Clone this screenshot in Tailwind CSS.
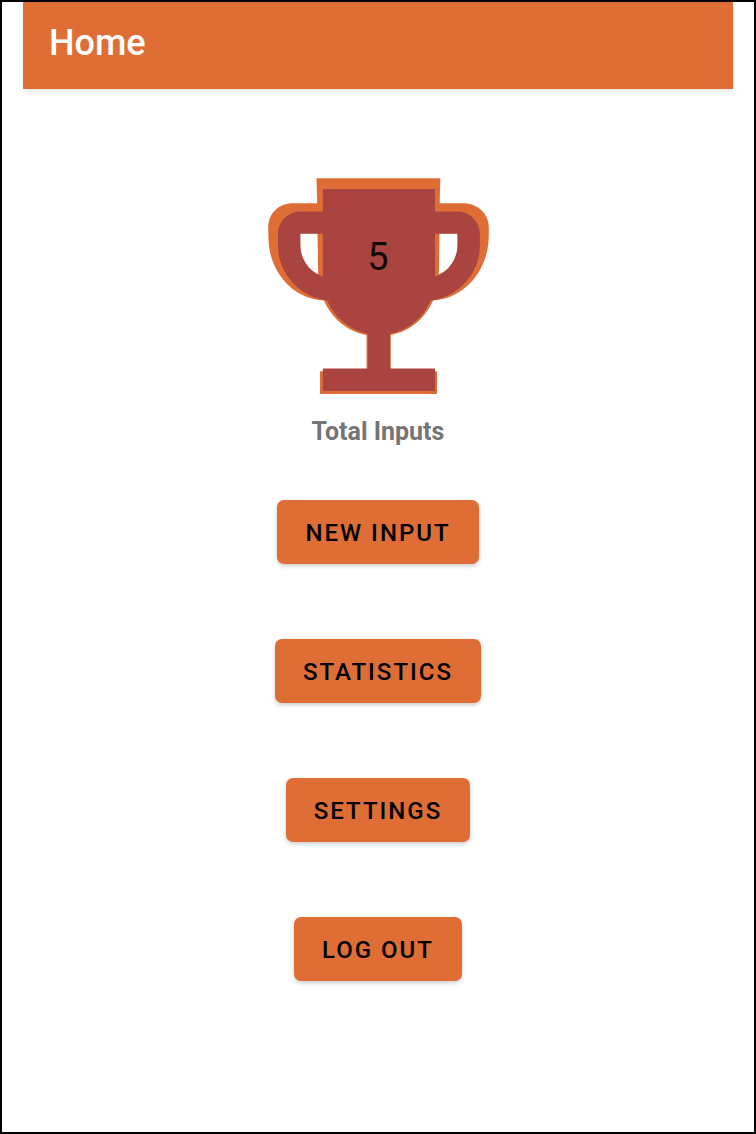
<!DOCTYPE html>
<html lang="en">
<head>
<meta charset="utf-8">
<meta name="viewport" content="width=device-width, initial-scale=1">
<title>Home</title>
<script src="https://cdn.jsdelivr.net/npm/@tailwindcss/browser@4"></script>
</head>
<body class="flex min-h-screen flex-col border-2 border-black bg-white px-[21px] font-[Roboto,sans-serif]">
<header class="flex h-[87px] items-center bg-[#de6e36] px-[26px] pb-[6px] shadow-[0_4px_6px_-1px_rgba(0,0,0,0.1)]">
  <h1 class="text-[36px] font-medium leading-10 text-white">Home</h1>
</header>
<main class="flex flex-col items-center pt-[89px]">
  <section class="flex flex-col items-center">
    <div class="relative">
      <svg class="block h-[216px] w-[221px]" viewBox="268 178 221 216" aria-hidden="true">
        <path fill="#de6e36" fill-rule="evenodd" d="M316.5 178.300H440.300L439.700 203.300H463C478 203.300 488.800 214 488.800 227V235C488.800 272 463 299 433 300.400C425 319 409 331.500 390.700 335V371.300H437V394H320V371.300H366.500V335C348 331.500 332 319 324 300.400C294 299 270 274 268.500 240L268.200 228C268.200 213 279 203.300 293 203.300H317.200ZM300 233.300V244.500C300 259 307 270 318.200 274.500L317.500 233.300ZM439.500 233.300L438.800 274.500C450 270 457.700 259 457.700 244.500V233.300Z"/>
        <path fill="#a94440" transform="translate(244.300 155.300) scale(11.22)" d="M19 5h-2V3H7v2H5c-1.100 0-2 .9-2 2v1c0 2.550 1.920 4.630 4.390 4.940.63 1.500 1.980 2.630 3.610 2.960V19H7v2h10v-2h-4v-3.100c1.630-.33 2.980-1.460 3.610-2.960C19.080 12.630 21 10.550 21 8V7c0-1.100-.9-2-2-2zM5 8V7h2v3.820C5.840 10.400 5 9.300 5 8zm14 0c0 1.300-.84 2.400-2 2.820V7h2v1z"/>
      </svg>
      <span class="absolute inset-x-0 top-[57px] text-center text-[38px] leading-[44px] text-[#170809]">5</span>
    </div>
    <p class="mt-[22px] text-[25px] font-bold leading-8 text-[#757575]">Total Inputs</p>
  </section>
  <nav class="mt-[52px] flex flex-col items-center gap-[75px]" aria-label="Main">
    <button type="button" class="h-16 rounded-[7px] bg-[#de6e36] px-7 pt-[2px] text-2xl font-medium tracking-[2px] text-black shadow-[0_2px_4px_rgba(0,0,0,0.2)]">NEW INPUT</button>
    <button type="button" class="h-16 rounded-[7px] bg-[#de6e36] px-7 pt-[2px] text-2xl font-medium tracking-[2px] text-black shadow-[0_2px_4px_rgba(0,0,0,0.2)]">STATISTICS</button>
    <button type="button" class="h-16 rounded-[7px] bg-[#de6e36] px-7 pt-[2px] text-2xl font-medium tracking-[2px] text-black shadow-[0_2px_4px_rgba(0,0,0,0.2)]">SETTINGS</button>
    <button type="button" class="h-16 rounded-[7px] bg-[#de6e36] px-7 pt-[2px] text-2xl font-medium tracking-[2px] text-black shadow-[0_2px_4px_rgba(0,0,0,0.2)]">LOG OUT</button>
  </nav>
</main>
</body>
</html>
